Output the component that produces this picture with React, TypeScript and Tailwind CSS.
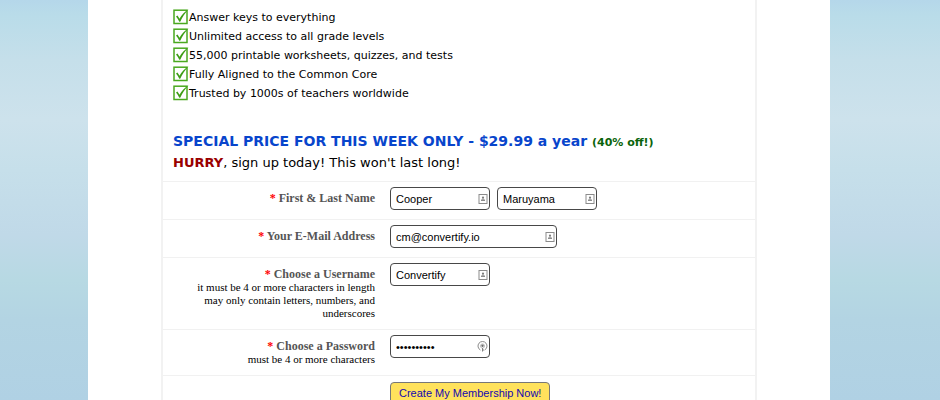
import { useState, type ReactNode } from "react";

const benefits = [
  "Answer keys to everything",
  "Unlimited access to all grade levels",
  "55,000 printable worksheets, quizzes, and tests",
  "Fully Aligned to the Common Core",
  "Trusted by 1000s of teachers worldwide",
];

function CheckIcon() {
  return (
    <svg className="mt-px size-4 shrink-0" viewBox="0 0 16 16" fill="none" aria-hidden="true">
      <rect x="1" y="1.2" width="13" height="13.300" stroke="#4aa81f" strokeWidth="1.500" />
      <path d="M3 7.400 4.500 6.400 6.500 9.800C8.600 6 11.500 2.600 15.600.2 12 4 9.200 8.300 7.200 12.700H6.300C5.400 10.700 4.400 8.900 3 7.400Z" fill="#3c9d14" />
    </svg>
  );
}

function ContactIcon() {
  return (
    <svg className="size-[10px]" viewBox="0 0 10 10" fill="none" aria-hidden="true">
      <rect x="1" y="0.5" width="8" height="9" stroke="#8c8c8c" />
      <circle cx="5" cy="3.500" r="1.100" fill="#7d7d7d" />
      <path d="M4.500 4h1v1.500h-1zM3 5.500h4V7H3z" fill="#8c8c8c" />
    </svg>
  );
}

function KeyIcon() {
  return (
    <svg className="size-[11px]" viewBox="0 0 11 11" fill="none" aria-hidden="true">
      <path d="M3.400 9A4.500 4.500 0 1 1 7.600 9" stroke="#8a8a8a" strokeWidth="1" />
      <circle cx="5.500" cy="5" r="2.100" stroke="#b0b0b0" strokeWidth="0.800" />
      <circle cx="5.500" cy="4.800" r="1.200" fill="#6c6c6c" />
      <path d="M5 7h1v3.500H5zM6 8.500h1v1H6z" fill="#808080" />
    </svg>
  );
}

type FieldProps = {
  id: string;
  initial: string;
  type?: string;
  wide?: boolean;
  label?: string;
};

function Field({ id, initial, type = "text", wide = false, label }: FieldProps) {
  const [value, setValue] = useState(initial);
  return (
    <div className={wide ? "relative w-[167px]" : "relative w-[100px]"}>
      <input
        id={id}
        name={id}
        type={type}
        aria-label={label}
        value={value}
        onChange={(e) => setValue(e.target.value)}
        className="block h-[23px] w-full rounded border border-[#484848] bg-white pr-4 pl-[5px] font-['Liberation_Sans',Arial,sans-serif] text-[11px] text-black"
      />
      <span className="pointer-events-none absolute inset-y-0 right-[2px] flex items-center">
        {type === "password" ? <KeyIcon /> : <ContactIcon />}
      </span>
    </div>
  );
}

function Row({ label, htmlFor, note, children }: { label?: string; htmlFor?: string; note?: string; children: ReactNode }) {
  return (
    <div className="grid grid-cols-[212px_1fr] gap-x-[15px] border-t border-[#f1f1f1] pb-[9px]">
      <div className="pt-[9px] pl-4 text-right font-['Liberation_Serif',Georgia,serif] text-[11px] leading-[13px] text-black">
        {label && (
          <label htmlFor={htmlFor} className="block text-[12px] leading-[14px] font-bold text-[#555]">
            <span className="text-[#f00]">*</span> {label}
          </label>
        )}
        {note}
      </div>
      <div className="flex flex-wrap items-start gap-[7px] pt-[5px]">{children}</div>
    </div>
  );
}

export default function App() {
  return (
    <div className="min-h-screen bg-[linear-gradient(#b5d7ea_0px,#b9dce9_15px,#c5dfea_60px,#cde2ec_120px,#c6dfea_170px,#c0d9e8_235px,#b7d9e3_280px,#b3d4e3_320px,#b0d1e4_400px)] px-[88px] font-['DejaVu_Sans',Verdana,sans-serif] text-black">
      <main className="mr-[22px] bg-white pr-[73px] pl-[73px]">
        <div className="border-x-2 border-[#f2f2f2]">
          <section className="px-[10px] pt-2 pb-[7px]">
            <ul className="text-[11px] leading-[19px]">
              {benefits.map((benefit) => (
                <li key={benefit} className="flex items-start">
                  <CheckIcon />
                  {benefit}
                </li>
              ))}
            </ul>
            <h2 className="mt-[27px] text-[14px] leading-[22px] font-bold text-[#0845cc]">
              SPECIAL PRICE FOR THIS WEEK ONLY - $29.99 a year{" "}
              <span className="text-[11px] leading-none text-[#0a640a]">(40% off!)</span>
            </h2>
            <p className="text-[13px] leading-[22px]">
              <strong className="text-[#990000]">HURRY</strong>, sign up today! This won't last long!
            </p>
          </section>
          <form onSubmit={(e) => e.preventDefault()}>
            <Row label="First & Last Name" htmlFor="first-name">
              <Field id="first-name" initial="Cooper" />
              <Field id="last-name" initial="Maruyama" label="Last name" />
            </Row>
            <Row label="Your E-Mail Address" htmlFor="email">
              <Field id="email" initial="cm@convertify.io" wide />
            </Row>
            <Row
              label="Choose a Username"
              htmlFor="username"
              note="it must be 4 or more characters in length may only contain letters, numbers, and underscores"
            >
              <Field id="username" initial="Convertify" />
            </Row>
            <Row label="Choose a Password" htmlFor="password" note="must be 4 or more characters">
              <Field id="password" initial="convertify" type="password" />
            </Row>
            <Row>
              <button
                type="submit"
                className="mt-px h-[23px] rounded border border-[#777] bg-[#ffe25c] px-2 font-['Liberation_Sans',Arial,sans-serif] text-[11px] text-[#1407b0]"
              >
                Create My Membership Now!
              </button>
            </Row>
          </form>
        </div>
      </main>
    </div>
  );
}
